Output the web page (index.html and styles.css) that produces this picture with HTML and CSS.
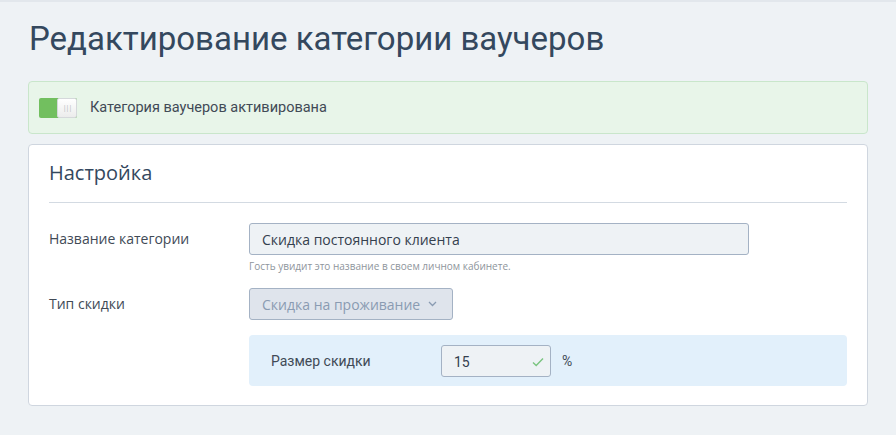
FILE: index.html
```html
<!DOCTYPE html>
<html lang="ru">
<head>
    <meta charset="UTF-8">
    <meta name="viewport" content="width=device-width, initial-scale=1.0">
    <title>Редактирование категории ваучеров</title>
    <link rel="stylesheet" href="styles.css">
</head>
<body>
    <div class="page">
        <!-- Заголовок -->
        <h1 class="page-title">Редактирование категории ваучеров</h1>

        <!-- Статус категории -->
        <div class="alert-success">
            <span class="toggle on"><span class="toggle-knob">|||</span></span>
            <span class="alert-text">Категория ваучеров активирована</span>
        </div>

        <!-- Настройки -->
        <div class="card">
            <h2 class="card-title">Настройка</h2>

            <div class="form-row">
                <label class="form-label" for="name">Название категории</label>
                <div class="form-field">
                    <input type="text" id="name" class="input input-wide" value="Скидка постоянного клиента">
                    <div class="hint">Гость увидит это название в своем личном кабинете.</div>
                </div>
            </div>

            <div class="form-row">
                <label class="form-label">Тип скидки</label>
                <div class="form-field">
                    <div class="select disabled">
                        Скидка на проживание
                        <svg class="chevron" width="9" height="6" viewBox="0 0 9 6"><path d="M1 1l3.5 3.5L8 1" fill="none" stroke="#8a9bb2" stroke-width="1.3"/></svg>
                    </div>
                </div>
            </div>

            <div class="sub-panel">
                <span class="sub-label">Размер скидки</span>
                <div class="input input-small">
                    <span>15</span>
                    <svg class="check" width="12" height="10" viewBox="0 0 12 10"><path d="M1 5.5l3.2 3L11 1.5" fill="none" stroke="#7ac47f" stroke-width="1.4"/></svg>
                </div>
                <span class="unit">%</span>
            </div>
        </div>
    </div>
</body>
</html>
```

FILE: styles.css
```css
/* Общие стили */
body {
    margin: 0;
    font-family: "Open Sans", sans-serif;
    background-color: #eef2f5;
    color: #3a4350;
    border-top: 2px solid #e2e7ec;
}
.page {
    padding: 0 28px;
}
.page-title {
    margin: 0;
    padding: 15px 0 0 1px;
    height: 64px;
    font-family: Roboto, sans-serif;
    font-weight: 400;
    font-size: 33px;
    line-height: 44px;
    color: #34485e;
}

/* Уведомление */
.alert-success {
    display: flex;
    align-items: center;
    height: 51px;
    padding: 0 10px;
    background-color: #e8f5e9;
    border: 1px solid #c9e6cb;
    border-radius: 4px;
}
.toggle {
    display: flex;
    width: 38px;
    height: 20px;
    border-radius: 2px;
    background-color: #72bf5f;
    justify-content: flex-end;
}
.toggle-knob {
    width: 18px;
    height: 18px;
    background: linear-gradient(#fff, #ececec);
    border: 1px solid #d5d8db;
    border-radius: 2px;
    font-size: 7px;
    line-height: 18px;
    text-align: center;
    color: #b0b4b8;
    letter-spacing: -1px;
}
.alert-text {
    margin-left: 13px;
    font-family: Roboto, sans-serif;
    font-size: 14.5px;
    color: #414a56;
}

/* Карточка */
.card {
    margin-top: 10px;
    padding: 0 20px 19px;
    background-color: #fff;
    border: 1px solid #cfd6df;
    border-radius: 4px;
}
.card-title {
    margin: 0 0 20px;
    padding: 15px 0 16px;
    font-size: 20px;
    font-weight: 400;
    line-height: 26px;
    color: #34485e;
    border-bottom: 1px solid #d3dae2;
}
.form-row {
    display: flex;
    margin-bottom: 15px;
}
.form-label {
    width: 200px;
    padding-top: 6px;
    font-size: 14px;
    color: #414a56;
}
.input {
    box-sizing: border-box;
    height: 32px;
    padding: 0 12px;
    font-family: "Open Sans", sans-serif;
    font-size: 14px;
    color: #34404e;
    background-color: #eef2f5;
    border: 1px solid #a4b2c4;
    border-radius: 3px;
}
.input-wide {
    width: 500px;
    display: block;
}
.hint {
    margin-top: 4px;
    font-size: 10px;
    color: #8e959c;
}
.select {
    box-sizing: border-box;
    display: inline-flex;
    align-items: center;
    width: 204px;
    height: 32px;
    padding: 0 12px;
    font-size: 14px;
    white-space: nowrap;
    color: #8a9bb2;
    background-color: #dfe4ec;
    border: 1px solid #a4b2c4;
    border-radius: 3px;
}
.chevron {
    margin-left: 8px;
}

/* Вложенная панель */
.sub-panel {
    display: flex;
    align-items: center;
    margin-left: 200px;
    height: 51px;
    padding: 0 22px;
    background-color: #e2f0fb;
    border-radius: 4px;
}
.sub-label {
    width: 170px;
    font-family: Roboto, sans-serif;
    font-size: 14px;
    color: #414a56;
}
.input-small {
    display: flex;
    align-items: center;
    justify-content: space-between;
    width: 110px;
    padding: 3px 6px 0 12px;
    font-family: Roboto, sans-serif;
}
.unit {
    margin-left: 11px;
    font-family: Roboto, sans-serif;
    font-size: 14px;
    color: #414a56;
}
```
